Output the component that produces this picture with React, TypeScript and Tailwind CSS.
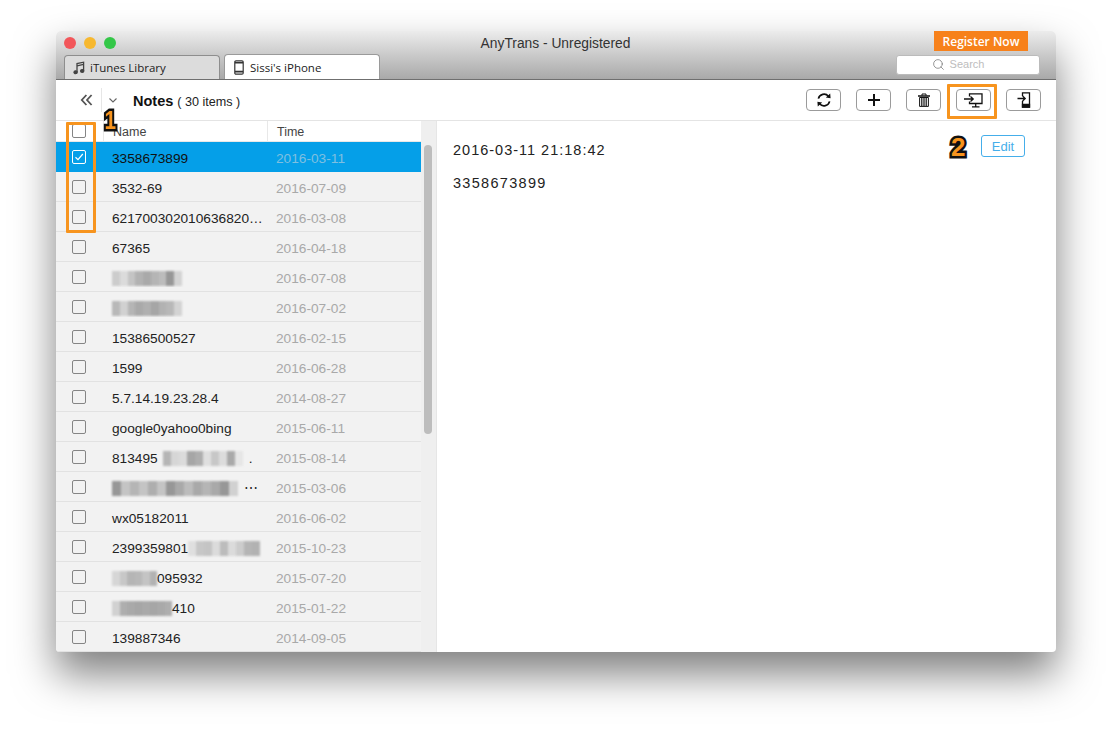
import React from 'react';
import { Search } from 'lucide-react';

const sans = { fontFamily: '"Liberation Sans", Arial, sans-serif' };

type Row = { name?: string; time: string; blur?: number[]; blurAfter?: boolean; suffix?: string; blurWidth?: number; gap?: number };

const rows: Row[] = [
  { name: '3358673899', time: '2016-03-11' },
  { name: '3532-69', time: '2016-07-09' },
  { name: '621700302010636820…', time: '2016-03-08' },
  { name: '67365', time: '2016-04-18' },
  { time: '2016-07-08', blur: [25, 15, 30, 42, 48, 40, 35, 60, 20], blurWidth: 70 },
  { time: '2016-07-02', blur: [38, 22, 40, 48, 44, 50, 42, 38, 20], blurWidth: 70 },
  { name: '15386500527', time: '2016-02-15' },
  { name: '1599', time: '2016-06-28' },
  { name: '5.7.14.19.23.28.4', time: '2014-08-27' },
  { name: 'google0yahoo0bing', time: '2015-06-11' },
  { name: '813495', time: '2015-08-14', blur: [40, 18, 15, 50, 45, 12, 28, 14, 48, 8], blurAfter: true, blurWidth: 80, gap: 5, suffix: '.' },
  { time: '2015-03-06', blur: [60, 30, 40, 30, 45, 30, 60, 48, 35, 48, 40, 48, 60, 22], blurWidth: 126, suffix: '⋯' },
  { name: 'wx05182011', time: '2016-06-02' },
  { name: '2399359801', time: '2015-10-23', blur: [12, 28, 30, 15, 35, 15, 25, 40, 42], blurAfter: true, blurWidth: 72 },
  { name: '095932', time: '2015-07-20', blur: [18, 28, 40, 38, 30, 42], blurWidth: 45 },
  { name: '410', time: '2015-01-22', blur: [22, 45, 48, 50, 48, 50, 48, 45], blurWidth: 60 },
  { name: '139887346', time: '2014-09-05' },
];

function Blur({ cells, width, gap }: { cells: number[]; width: number; gap?: number }) {
  return (
    <span className="inline-flex h-[15px] shrink-0 -translate-y-px blur-[1px]" style={{ width, marginLeft: gap }}>
      {cells.map((v, i) => (
        <span key={i} className="flex-1 h-full" style={{ backgroundColor: `rgba(90,90,90,${v / 100})` }} />
      ))}
    </span>
  );
}

function Checkbox({ checked }: { checked?: boolean }) {
  return (
    <span className={`flex h-[14px] w-[14px] items-center justify-center rounded-[2px] border ${checked ? 'border-white' : 'border-[#858585]'}`}>
      {checked && (
        <svg width="10" height="10" viewBox="0 0 10 10" fill="none" stroke="#fff" strokeWidth="1.2">
          <path d="M1.5 5.2 L4 7.6 L8.8 2" />
        </svg>
      )}
    </span>
  );
}

function ToolButton({ children }: { children: React.ReactNode }) {
  return (
    <button className="flex h-[22px] w-[35px] items-center justify-center rounded-[4px] border border-[#9b9b9b] bg-white">
      {children}
    </button>
  );
}

function Marker({ n, className }: { n: string; className: string }) {
  return (
    <span
      className={`absolute font-bold text-[26px] leading-none text-[#f7941e] ${className}`}
      style={{ ...sans, WebkitTextStroke: '5px #111', paintOrder: 'stroke fill' }}
    >
      {n}
    </span>
  );
}

export default function App() {
  return (
    <div className="h-[732px] w-[1112px] overflow-hidden bg-white pl-[56px] pt-[31px]" style={sans}>
      <div className="relative flex h-[621px] w-[1000px] flex-col overflow-hidden rounded-t-[5px] rounded-b-[4px] bg-white shadow-[0_22px_42px_rgba(0,0,0,0.5)]">
        {/* Title bar */}
        <div className="relative flex h-[49px] shrink-0 flex-col border-b border-[#6f6f6f] bg-gradient-to-b from-[#ececec] to-[#a9a9a9]">
          <div className="flex h-[24px] items-center">
            <div className="flex gap-[8px] pl-[8px]">
              <span className="h-[12px] w-[12px] rounded-full bg-[#f2565a]" />
              <span className="h-[12px] w-[12px] rounded-full bg-[#f7b82f]" />
              <span className="h-[12px] w-[12px] rounded-full bg-[#34c748]" />
            </div>
            <span className="flex-1 translate-y-px pr-[61px] pt-[2px] text-center text-[13.8px] text-[#333]">
              AnyTrans - Unregistered
            </span>
          </div>
          <div className="flex flex-1 items-end pl-[8px] text-[11.5px] text-[#222]" style={{ fontFamily: '"Open Sans", sans-serif' }}>
            <div className="flex h-[24px] w-[156px] items-center gap-[5px] rounded-t-[4px] border border-b-0 border-[#8e8e8e] bg-[#dcdcdc] pl-[8px]">
              <svg width="12" height="14" viewBox="0 0 12 14" fill="none" stroke="#444" strokeWidth="1.3">
                <path d="M4 11 V2.6 L10.6 1.2 V9.8" />
                <path d="M4 4.8 L10.6 3.4" />
                <ellipse cx="2.6" cy="11.2" rx="1.6" ry="1.4" fill="#444" />
                <ellipse cx="9.2" cy="10" rx="1.6" ry="1.4" fill="#444" />
              </svg>
              iTunes Library
            </div>
            <div className="ml-[4px] flex h-[25px] w-[156px] items-center gap-[6px] rounded-t-[4px] border border-b-0 border-[#9a9a9a] bg-white pl-[9px]">
              <svg width="10" height="15" viewBox="0 0 10 15" fill="none" stroke="#333" strokeWidth="1.2">
                <rect x="0.8" y="0.8" width="8.4" height="13.4" rx="1.2" />
                <path d="M1 11.6 H9 M1 2.8 H9" strokeWidth="1.6" />
              </svg>
              <span className="translate-y-px">Sissi's iPhone</span>
            </div>
          </div>
          <div className="absolute right-[28px] top-0 flex h-[20px] w-[94px] items-center justify-center bg-[#f7811b] pt-[1px] text-[12px] font-semibold text-white" style={{ fontFamily: '"Open Sans", sans-serif' }}>
            Register Now
          </div>
          <div className="absolute right-[16px] top-[24px] flex h-[20px] w-[144px] items-center justify-center gap-[5px] rounded-[3px] border border-[#bbb] bg-white pr-[20px] pb-[1px] text-[11px] text-[#bdbdbd]">
            <Search size={13} strokeWidth={1.4} className="text-[#777]" />
            Search
          </div>
        </div>

        {/* Toolbar */}
        <div className="flex h-[41px] shrink-0 items-center border-b border-[#e4e4e4] pr-[15px] pt-[2px]">
          <div className="flex h-[24px] -translate-y-px items-center pl-[24px]">
            <svg width="13" height="14" viewBox="0 0 13 14" fill="none" stroke="#555" strokeWidth="1.8">
              <path d="M6.4 2 L1.8 7 L6.4 12 M11.6 2 L7 7 L11.6 12" />
            </svg>
            <span className="ml-[8px] h-[24px] w-px bg-[#e6e6e6]" />
            <svg className="ml-[6px]" width="10" height="10" viewBox="0 0 10 10" fill="none" stroke="#666" strokeWidth="1.1">
              <path d="M1.5 3.5 L5 7 L8.5 3.5" />
            </svg>
          </div>
          <span className="ml-[15px] translate-y-px text-[14.5px] font-bold text-[#111]">Notes</span>
          <span className="ml-[4px] translate-y-px text-[12.6px] text-[#222]">( 30 items )</span>
          <div className="ml-auto flex -translate-y-px gap-[15px]">
            <ToolButton>
              <svg width="16" height="16" viewBox="0 0 16 16" fill="none" stroke="#111" strokeWidth="1.7">
                <path d="M2.4 6.6 A5.8 5.8 0 0 1 12.4 4.2" />
                <path d="M13.6 9.4 A5.8 5.8 0 0 1 3.6 11.8" />
                <path d="M9.8 5.6 L14.6 6.2 L14.2 1.6 Z M6.2 10.4 L1.4 9.8 L1.8 14.4 Z" fill="#111" stroke="none" />
              </svg>
            </ToolButton>
            <ToolButton>
              <svg width="14" height="14" viewBox="0 0 14 14" stroke="#111" strokeWidth="2">
                <path d="M7 1 V13 M1 7 H13" />
              </svg>
            </ToolButton>
            <ToolButton>
              <svg width="12" height="14" viewBox="0 0 12 14" fill="none" stroke="#111" strokeWidth="1">
                <path d="M0 3 H12" strokeWidth="1.5" />
                <path d="M4 2.6 V1 H8 V2.6" />
                <path d="M1.6 4.5 H10.4 V13.4 H1.6 Z" />
                <path d="M3.8 5 V13 M6 5 V13 M8.2 5 V13" strokeWidth="1.2" />
              </svg>
            </ToolButton>
            <ToolButton>
              <svg width="19" height="15" viewBox="0 0 19 15" fill="none" stroke="#111" strokeWidth="1.3">
                <path d="M5.5 3.5 V0.8 H18 V10.5 H5.5 V8.5" />
                <path d="M11.7 10.5 V13.5 M8 13.8 H15.5" />
                <path d="M0 6 H9 M6.5 3.6 L9.2 6 L6.5 8.4" />
              </svg>
            </ToolButton>
            <ToolButton>
              <svg width="14" height="16" viewBox="0 0 14 16" fill="none" stroke="#111" strokeWidth="1.3">
                <path d="M5.5 4 V0.8 H12.5 V15 H5.5 V9" />
                <path d="M5.5 12.5 H12.5 V15 H5.5 Z" fill="#111" />
                <path d="M0.5 6.5 H8 M5.6 4 L8.2 6.5 L5.6 9" />
              </svg>
            </ToolButton>
          </div>
        </div>

        {/* Body */}
        <div className="flex min-h-0 flex-1">
          <div className="flex w-[381px] shrink-0 flex-col border-r border-[#e6e6e6]">
            <div className="flex min-h-0 flex-1">
              <div className="flex w-[365px] shrink-0 flex-col overflow-hidden">
                <div className="flex h-[21px] shrink-0 items-center border-b border-[#e8e8e8] bg-white text-[12.5px] text-[#444]">
                  <div className="flex w-[47px] items-center justify-center pr-[1px]">
                    <Checkbox />
                  </div>
                  <div className="flex h-full w-[165px] items-center border-l border-r border-[#e8e8e8] pl-[9px] pt-[3px]">Name</div>
                  <div className="pl-[9px] pt-[3px]">Time</div>
                </div>
                {rows.map((r, i) => (
                  <div
                    key={i}
                    className={`flex h-[30px] shrink-0 items-center text-[13.7px] ${i === 0 ? 'bg-[#059fe8] text-[#111]' : 'border-b border-[#e2e2e2] bg-[#f2f2f2] text-[#222]'}`}
                  >
                    <div className="flex w-[47px] shrink-0 justify-center pr-[1px]">
                      <Checkbox checked={i === 0} />
                    </div>
                    <div className={`flex w-[164px] shrink-0 items-center overflow-hidden pl-[9px] whitespace-nowrap ${i === 0 ? 'pt-[4px]' : 'pt-[6px]'}`}>
                      {r.blur && !r.blurAfter && <Blur cells={r.blur} width={r.blurWidth ?? 60} />}
                      {r.name}
                      {r.blur && r.blurAfter && <Blur cells={r.blur} width={r.blurWidth ?? 60} gap={r.gap} />}
                      {r.suffix && <span className="ml-[6px]">{r.suffix}</span>}
                    </div>
                    <div className={`pl-[9px] ${i === 0 ? 'pt-[4px] text-[#7fbfe0]' : 'pt-[6px] text-[#a9a9a9]'}`}>{r.time}</div>
                  </div>
                ))}
              </div>
              {/* Scrollbar */}
              <div className="w-[15px] bg-[#efefef] pl-[3px] pt-[24px]">
                <div className="h-[289px] w-[8px] rounded-full bg-[#bdbdbd]" />
              </div>
            </div>
          </div>

          {/* Detail */}
          <div className="relative flex-1 pl-[16px] pt-[20px] text-[14.5px] text-[#222]">
            <div className="leading-[18px] tracking-[1px]">2016-03-11 21:18:42</div>
            <div className="mt-[15px] leading-[18px] tracking-[1.3px]">3358673899</div>
            <button className="absolute right-[31px] top-[14px] h-[22px] w-[44px] rounded-[3px] border border-[#45aeea] pt-[1px] text-[13px] text-[#45aeea]">
              Edit
            </button>
          </div>
        </div>

        {/* Annotations */}
        <div className="absolute left-[10px] top-[91px] h-[111px] w-[30px] rounded-[1px] border-[3px] border-[#f7941e]" />
        <div className="absolute left-[891px] top-[53px] h-[35px] w-[50px] rounded-[1px] border-[3px] border-[#f7941e]" />
        <Marker n="1" className="left-[47px] top-[76px] scale-x-[0.8]" />
        <Marker n="2" className="left-[895px] top-[103px]" />
      </div>
    </div>
  );
}
